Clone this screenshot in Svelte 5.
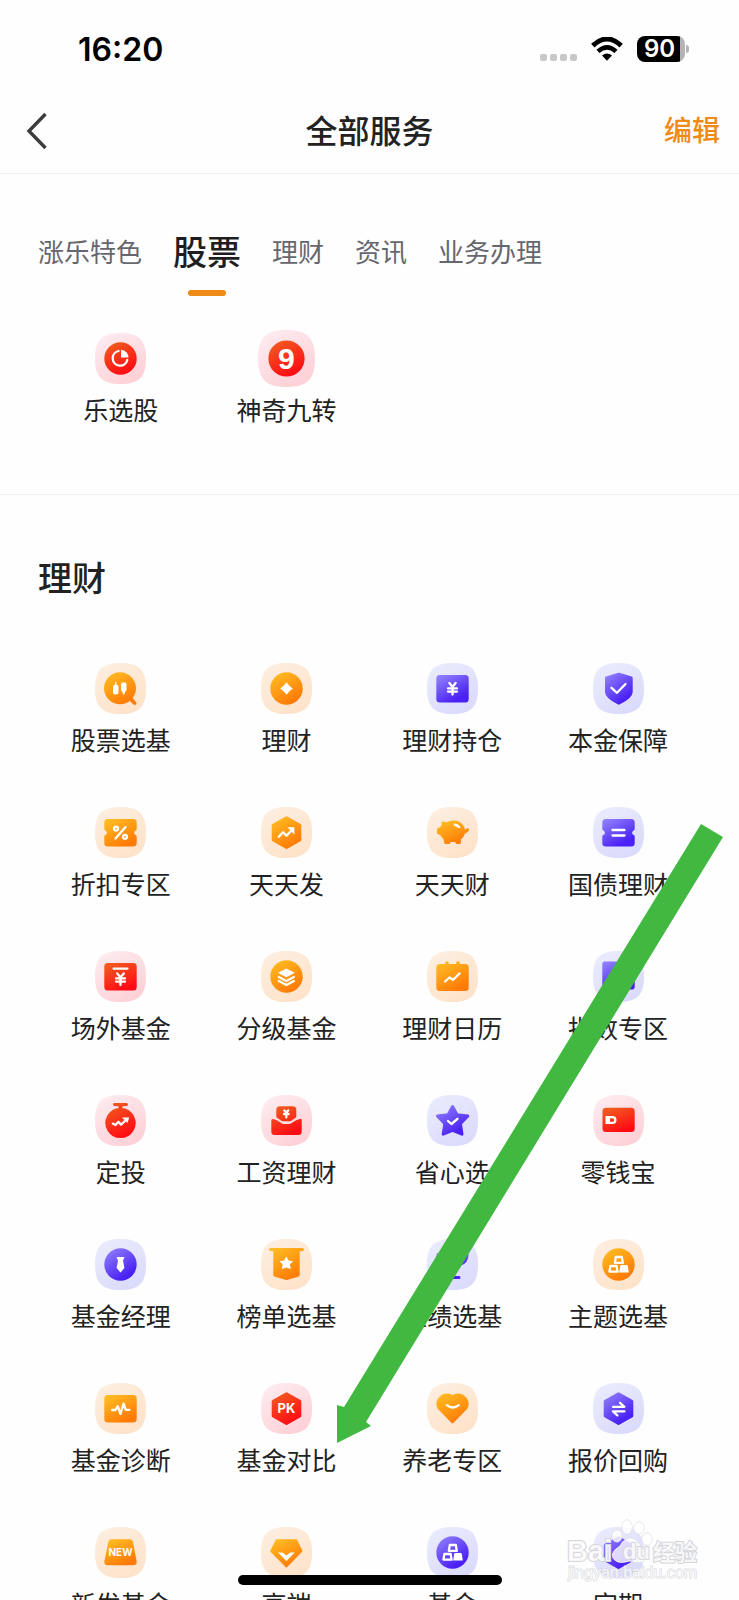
<script lang="ts">
  type Tone = 'red' | 'orange' | 'purple'

  interface Service {
    label: string
    tone: Tone
    body: string
    // white details on top of the body
    fill?: string
    line?: string
    text?: string
    textSize?: number
    dot?: string
    large?: boolean
  }

  const circle = 'M25.5 10.8a14.7 14.7 0 1 1 0 29.4a14.7 14.7 0 1 1 0-29.4Z'
  const card =
    'M12.8 13.5H38.2A2 2 0 0 1 40.2 15.5V36A2 2 0 0 1 38.2 38H12.8A2 2 0 0 1 10.8 36V15.5A2 2 0 0 1 12.8 13.5Z'
  const hexagon = 'M25.5 10.8L38.8 18.2V33L25.5 40.4L12.2 33V18.2Z'
  const ticket =
    'M12.8 13.5H38.2A2 2 0 0 1 40.2 15.5V22A4 4 0 0 0 40.2 29.5V36A2 2 0 0 1 38.2 38H12.8A2 2 0 0 1 10.8 36V29.5A4 4 0 0 0 10.8 22V15.5A2 2 0 0 1 12.8 13.5Z'
  const yen = 'M22.4 20L25.5 24L28.6 20M21 25.4H30M21 28.6H30M25.5 24V31.6'
  const boxes =
    'M22.8 18H28.8L29.8 23.8H21.8ZM17.4 27H23.6L24.6 32.6H16.4Z'
  const solidBox = 'M28.5 26H33.5Q34.5 26 34.8 27L35.8 33.4H26.2L27.2 27Q27.5 26 28.5 26Z'

  let tabs = ['涨乐特色', '股票', '理财', '资讯', '业务办理']
  let activeTab = $state('股票')

  const stockServices: Service[] = [
    {
      label: '乐选股',
      tone: 'red',
      body: circle,
      fill: 'M26 16.8A8 8 0 0 1 33.6 24.6H26Z',
      line: 'M23.5 18A7.4 7.4 0 1 0 32.3 27',
    },
    {
      label: '神奇九转',
      tone: 'red',
      body: circle,
      text: '9',
      textSize: 27,
      large: true,
    },
  ]

  const wealthServices: Service[] = [
    {
      label: '股票选基',
      tone: 'orange',
      body: 'M25 10.8a14.5 14.5 0 1 1 0 29a14.5 14.5 0 1 1 0-29ZM35 34L40 40.4L39 40L34 35Z',
      fill: 'M20.2 19H21.4V21.5Q23.5 22 23.5 24V29.5Q23.5 31.5 20.8 31.5Q18 31.5 18 29.5V24Q18 22 20.2 21.5ZM28.7 19.2Q31.5 19.2 31.5 21V26.5Q31.5 28.3 30 28.8L29.4 31.5H28L27.4 28.8Q26 28.3 26 26.5V21Q26 19.2 28.7 19.2Z',
    },
    {
      label: '理财',
      tone: 'orange',
      body: circle,
      fill: 'M25.5 19.2Q28 23 31.8 25.5Q28 28 25.5 31.8Q23 28 19.2 25.5Q23 23 25.5 19.2Z',
    },
    { label: '理财持仓', tone: 'purple', body: card, line: yen },
    {
      label: '本金保障',
      tone: 'purple',
      body: 'M25.8 11.2L38.2 15V29Q38 34.5 25.8 40.2Q13.7 34.5 13.5 29V15Z',
      line: 'M18.5 24.8L24 29.8L32.5 21',
    },
    {
      label: '折扣专区',
      tone: 'orange',
      body: ticket,
      line: 'M30.5 20L20.5 31.5M21 19.6a2 2 0 1 1 0 4a2 2 0 1 1 0-4ZM30 27.8a2 2 0 1 1 0 4a2 2 0 1 1 0-4Z',
    },
    {
      label: '天天发',
      tone: 'orange',
      body: hexagon,
      fill: 'M26.5 20.3H33.3V27.5Z',
      line: 'M17.8 29.8L22 25.2L25.5 28.6L31 23',
    },
    {
      label: '天天财',
      tone: 'orange',
      body: 'M16 15.8L19.5 17Q26 13.8 31 15.8Q36.4 18.4 36.6 24Q36.6 29 32.4 31.6V35.6H30L29.3 33.6H22.5L21.8 35.6H18.8L17.6 31Q15.5 29.5 14.8 27.4L11.4 25.4V22.6L14.8 20.8Q16.4 19 16 15.8ZM37 25L40.6 22.8L38 25Z',
      fill: 'M27 16.6Q31.5 16.4 33.5 20.4Q31.4 21.6 30 20Q28 19.4 26.6 18.2Z',
    },
    {
      label: '国债理财',
      tone: 'purple',
      body: ticket,
      line: 'M19.5 23H31.5M19.5 28.5H31.5',
    },
    {
      label: '场外基金',
      tone: 'red',
      body: card,
      line: 'M18.5 17.6H32.5M22.2 22.4L25.5 26.2L28.8 22.4M21 27.4H30M21 30.6H30M25.5 26V34',
    },
    {
      label: '分级基金',
      tone: 'orange',
      body: circle,
      fill: 'M25.3 17.5L33.8 21.8L25.3 26.2L16.8 21.8Z',
      line: 'M17.8 26L25.3 30L32.8 26M17.8 30L25.3 34L32.8 30',
    },
    {
      label: '理财日历',
      tone: 'orange',
      body: 'M12.8 14.6H19.8V11.8H20.2V14.6H30.8V11.8H31.2V14.6H38.2A2 2 0 0 1 40.2 16.6V36.4A2 2 0 0 1 38.2 38.4H12.8A2 2 0 0 1 10.8 36.4V16.6A2 2 0 0 1 12.8 14.6Z',
      line: 'M18 30.5L22.5 26.5L26 28.8L32.5 22.5',
    },
    {
      label: '指数专区',
      tone: 'purple',
      body: 'M12 12H39A1 1 0 0 1 40.2 13V36A1 1 0 0 1 39 37H12A1 1 0 0 1 10.8 36V13A1 1 0 0 1 12 12Z',
      line: 'M21 28V24M25.5 28V21M30 28V26',
    },
    {
      label: '定投',
      tone: 'red',
      body: 'M19.5 9.5H31.5L26 10V14.4A13.6 13.6 0 1 1 25 14.4V10Z',
      fill: 'M27 22.5H34.2L32.5 28Z',
      line: 'M17.8 28.6L20.5 30L23.4 26.8L26 29.6L31 25',
    },
    {
      label: '工资理财',
      tone: 'red',
      body: 'M18.8 12.8H31.8A2 2 0 0 1 33.8 14.8V21.6L29 24.8H21.6L16.8 21.6V14.8A2 2 0 0 1 18.8 12.8ZM11.8 25.4L14.6 26.4L21.2 30.4H29.6L36.4 26.4L39.2 25.4V36.6A2 2 0 0 1 37.2 38.6H13.8A2 2 0 0 1 11.8 36.6Z',
      line: 'M23.4 15.4L25.3 17.6L27.2 15.4M23 19H27.6M25.3 17.6V22.4',
    },
    {
      label: '省心选',
      tone: 'purple',
      body: 'M25.6 11.5L30 19.8L40.8 21L33.4 28.6L35 39.2L25.6 35.4L16.2 39.2L17.8 28.6L10.4 21L21.2 19.8Z',
      line: 'M21 26L24.4 29L30.5 23.8',
    },
    {
      label: '零钱宝',
      tone: 'red',
      body: 'M13 14.2H38.2A2 2 0 0 1 40.2 16.2V33.6A2 2 0 0 1 38.2 35.6H13A2 2 0 0 1 11 33.6V16.2A2 2 0 0 1 13 14.2Z',
      fill: 'M12.5 21H19.5A4 4 0 0 1 19.5 29H12.5Z',
      dot: 'M17 23.2H19.4A1.8 1.8 0 0 1 19.4 26.8H17Z',
    },
    {
      label: '基金经理',
      tone: 'purple',
      body: circle,
      fill: 'M21.5 18H29.5L28 21.5L29.4 29L25.5 33.6L21.6 29L23 21.5Z',
    },
    {
      label: '榜单选基',
      tone: 'orange',
      body: 'M9.6 10.4H41.4L37.2 11V36L25.5 39.6L13.8 36V11Z',
      fill: 'M25.3 17.6L27.6 21.6L32 22.2L28.9 25.6L29.8 30L25.3 28.4L20.8 30L21.7 25.6L18.6 22.2L23 21.6Z',
    },
    {
      label: '业绩选基',
      tone: 'purple',
      body: 'M16.5 12H34.5V15.5H40Q40 23 33.5 25Q31 30 26.5 31.5V38.5H32H19H24.5V31.5Q20 30 17.5 25Q11 23 11 15.5H16.5Z',
    },
    {
      label: '主题选基',
      tone: 'orange',
      body: circle,
      fill: solidBox,
      line: boxes,
    },
    {
      label: '基金诊断',
      tone: 'orange',
      body: card,
      line: 'M17 27H20.5L22.8 23.2L25.4 31L28.6 20.6L30.8 26.8H34.4',
    },
    {
      label: '基金对比',
      tone: 'red',
      body: hexagon,
      text: 'PK',
      textSize: 13,
    },
    {
      label: '养老专区',
      tone: 'orange',
      body: 'M25.5 14Q29.8 10.4 35.6 13.2Q42.6 18 39 25L25.5 38.8L12 25Q8.4 18 15.4 13.2Q21.2 10.4 25.5 14Z',
      line: 'M19.8 22.2Q25.8 26.8 31.8 22.2',
    },
    {
      label: '报价回购',
      tone: 'purple',
      body: hexagon,
      line: 'M20 23.8H31.4L27 19.8M31.4 28.4H20L24.4 32.4',
    },
    {
      label: '新发基金',
      tone: 'orange',
      body: 'M16.4 13.8H34.8Q36 13.8 36.4 15L40.2 34.6Q40.4 36.8 38.4 36.8H12.6Q10.6 36.8 10.8 34.6L14.8 15Q15.2 13.8 16.4 13.8Z',
      text: 'NEW',
      textSize: 10,
    },
    {
      label: '高端',
      tone: 'orange',
      body: 'M16 13.8H35L39.8 24L25.4 38.8L10.8 24Z',
      fill: 'M17 25.4H21.5L25.4 28.4L29.3 25.4H33.8L25.4 34Z',
    },
    {
      label: '基金',
      tone: 'purple',
      body: circle,
      fill: solidBox,
      line: boxes,
    },
    { label: '定期', tone: 'purple', body: hexagon },
  ]
</script>

{#snippet serviceGrid(services: Service[])}
  <div class="grid">
    {#each services as service}
      <button class="service">
        <svg class="tile" class:large={service.large} viewBox="0 0 51 51" aria-hidden="true">
          <path
            d="M25.5 0C44 0 51 7 51 25.5S44 51 25.5 51S0 44 0 25.5S7 0 25.5 0Z"
            fill="url(#tile-{service.tone})"
          />
          <path
            class="body"
            d={service.body}
            fill="url(#{service.tone})"
            stroke="url(#{service.tone})"
          />
          {#if service.fill}
            <path d={service.fill} fill="#fff" />
          {/if}
          {#if service.dot}
            <path d={service.dot} fill="url(#{service.tone})" />
          {/if}
          {#if service.line}
            <path class="line" d={service.line} />
          {/if}
          {#if service.text}
            <text
              class:digit={service.large}
              x="25.5"
              y={25.5 + service.textSize! * 0.36}
              font-size={service.textSize}>{service.text}</text
            >
          {/if}
        </svg>
        <span>{service.label}</span>
      </button>
    {/each}
  </div>
{/snippet}

<svg class="defs" width="0" height="0" aria-hidden="true">
  <defs>
    <linearGradient id="red" x1="0.2" y1="0" x2="0.7" y2="1">
      <stop offset="0" stop-color="#f2581f" />
      <stop offset="1" stop-color="#ff0a14" />
    </linearGradient>
    <linearGradient id="orange" x1="0.1" y1="0" x2="0.7" y2="1">
      <stop offset="0" stop-color="#ffbb22" />
      <stop offset="1" stop-color="#ff7a06" />
    </linearGradient>
    <linearGradient id="purple" x1="0.1" y1="0" x2="0.7" y2="0.9">
      <stop offset="0" stop-color="#8d7cfb" />
      <stop offset="1" stop-color="#4a20f4" />
    </linearGradient>
    <linearGradient id="tile-red" x1="0.2" y1="0" x2="0.8" y2="1">
      <stop offset="0" stop-color="#fdebf0" />
      <stop offset="1" stop-color="#fecfd4" />
    </linearGradient>
    <linearGradient id="tile-orange" x1="0.2" y1="0" x2="0.8" y2="1">
      <stop offset="0" stop-color="#fdeee0" />
      <stop offset="1" stop-color="#fee2c8" />
    </linearGradient>
    <linearGradient id="tile-purple" x1="0.2" y1="0" x2="0.8" y2="1">
      <stop offset="0" stop-color="#ebebfd" />
      <stop offset="1" stop-color="#d9d9fb" />
    </linearGradient>
  </defs>
</svg>

<div class="screen">
  <div class="status">
    <time>16:20</time>
    <div class="signals">
      <div class="dots"><i></i><i></i><i></i><i></i></div>
      <svg width="32" height="24" viewBox="0 0 32 24" aria-hidden="true">
        <path d="M1.8 8.6Q16-4.6 30.2 8.6" fill="none" stroke="#000" stroke-width="5" />
        <path d="M7 14.4Q16 6.4 25 14.4" fill="none" stroke="#000" stroke-width="4.6" />
        <path d="M11 18.4Q16 14.6 21 18.4L16 23.8Z" />
      </svg>
      <div class="battery"><span>90</span></div>
    </div>
  </div>

  <header>
    <button class="back" aria-label="返回">
      <svg width="22" height="38" viewBox="0 0 22 38" aria-hidden="true">
        <path d="M19.5 2L3 19L19.5 36" fill="none" stroke="#3c3c3e" stroke-width="3.4" />
      </svg>
    </button>
    <h1>全部服务</h1>
    <button class="edit">编辑</button>
  </header>

  <nav>
    {#each tabs as tab}
      <button class:active={tab === activeTab} onclick={() => (activeTab = tab)}>{tab}</button>
    {/each}
  </nav>

  <section class="stocks">
    {@render serviceGrid(stockServices)}
  </section>

  <section class="wealth">
    <h2>理财</h2>
    {@render serviceGrid(wealthServices)}
  </section>

  <svg class="arrow" width="388" height="620" viewBox="0 0 388 620" aria-hidden="true">
    <path d="M365 1L387 14L30 599L35 603L1 620V582L8 584Z" fill="#41b941" />
  </svg>

  <div class="home-indicator"></div>

  <svg class="watermark" width="140" height="66" viewBox="0 0 140 66">
    <text x="4" y="43" font-size="29">Bai</text>
    <g class="paw">
      <ellipse cx="54" cy="18" rx="5" ry="6" />
      <ellipse cx="64" cy="9" rx="5" ry="7" />
      <ellipse cx="76" cy="10" rx="5" ry="6" />
      <ellipse cx="84" cy="21" rx="5" ry="6" />
      <path d="M67 20Q60 21 57 28Q47 34 50 40Q54 47 67 43Q79 47 83 41Q87 35 78 29Q74 20 67 20Z" />
    </g>
    <text x="60" y="41" font-size="22">du</text>
    <text x="90" y="42" font-size="22">经验</text>
    <text class="domain" x="5" y="60" font-size="16">jingyan.baidu.com</text>
  </svg>
</div>

<style>
  :global(body) {
    margin: 0;
    background: #fefefe;
  }

  .defs {
    position: absolute;
  }

  .screen {
    position: relative;
    height: 100vh;
    overflow: hidden;
    color: #222;
    background: #fefefe;
    font-family: 'Noto Sans CJK SC', sans-serif;
  }

  button {
    padding: 0;
    border: 0;
    background: none;
    color: inherit;
    font: inherit;
    cursor: pointer;
  }

  .status {
    display: flex;
    align-items: center;
    justify-content: space-between;
    box-sizing: border-box;
    height: 89px;
    padding: 9px 54px 0 78px;
    color: #000;
    font-family: Inter, sans-serif;
    font-weight: 600;
  }

  time {
    font-size: 32px;
  }

  .signals {
    display: flex;
    align-items: center;
    gap: 14px;
  }

  .dots {
    display: flex;
    gap: 3px;
    padding-top: 17px;
  }

  .dots i {
    width: 7px;
    height: 7px;
    border-radius: 2px;
    background: #c8c8c8;
  }

  .battery {
    position: relative;
    width: 48px;
    height: 26px;
    border-radius: 8px;
    background: linear-gradient(90deg, #000 90%, #b4b4b4 90%);
    color: #fff;
    font-size: 24px;
    line-height: 26px;
  }

  .battery span {
    display: block;
    width: 45px;
    text-align: center;
  }

  .battery::after {
    content: '';
    position: absolute;
    top: 9px;
    right: -4px;
    width: 3px;
    height: 8px;
    border-radius: 0 4px 4px 0;
    background: #b4b4b4;
  }

  header {
    display: grid;
    grid-template-columns: 1fr auto 1fr;
    align-items: center;
    height: 84px;
    padding: 0 19px;
    border-bottom: 1px solid #f0f0f0;
  }

  .back {
    justify-self: start;
    height: 38px;
    padding-left: 7px;
  }

  h1 {
    margin: 0;
    padding-bottom: 4px;
    font-size: 32px;
    font-weight: 500;
    line-height: 48px;
  }

  .edit {
    justify-self: end;
    padding-bottom: 4px;
    color: #ef8a17;
    font-size: 28px;
    font-weight: 500;
    line-height: 48px;
  }

  nav {
    display: flex;
    gap: 31px;
    padding: 53px 38px 0;
  }

  nav button {
    position: relative;
    padding-bottom: 21px;
    color: #66666f;
    font-size: 26px;
    line-height: 48px;
    white-space: nowrap;
  }

  nav .active {
    color: #1e1e1e;
    font-size: 34px;
    font-weight: 500;
  }

  nav .active::after {
    content: '';
    position: absolute;
    bottom: 0;
    left: 50%;
    width: 38px;
    height: 6px;
    margin-left: -19px;
    border-radius: 3px;
    background: #ef8a17;
  }

  .stocks {
    padding: 37px 38px 67px;
    border-bottom: 1px solid #f0f0f0;
  }

  .wealth {
    padding: 58px 38px 0;
  }

  h2 {
    margin: 0 0 62px;
    font-size: 34px;
    font-weight: 500;
    line-height: 48px;
  }

  .grid {
    display: grid;
    grid-template-columns: repeat(4, 1fr);
    row-gap: 50px;
  }

  .service {
    display: flex;
    flex-direction: column;
    align-items: center;
    gap: 7px;
    font-size: 25px;
    line-height: 36px;
  }

  .tile {
    width: 51px;
    height: 51px;
  }

  .tile.large {
    width: 57px;
    height: 57px;
    margin: -3px;
  }

  .tile .body {
    stroke-width: 3;
    stroke-linejoin: round;
  }

  .tile .line {
    fill: none;
    stroke: #fff;
    stroke-width: 2.3;
    stroke-linecap: round;
    stroke-linejoin: round;
  }

  .tile text {
    fill: #fff;
    font-family: Inter, sans-serif;
    font-weight: 700;
    text-anchor: middle;
  }

  .tile .digit {
    font-family: 'Liberation Sans', sans-serif;
  }

  .arrow {
    position: absolute;
    top: 823px;
    left: 336px;
  }

  .home-indicator {
    position: absolute;
    bottom: 15px;
    left: 50%;
    width: 264px;
    height: 10px;
    margin-left: -132px;
    border-radius: 5px;
    background: #000;
  }

  .watermark {
    position: absolute;
    right: 36px;
    bottom: 16px;
    fill: #fff;
    fill-opacity: 0.8;
    stroke: #d6d6dc;
    stroke-width: 2;
    font-family: 'Liberation Sans', 'Noto Sans CJK SC', sans-serif;
    font-weight: 700;
    paint-order: stroke;
  }

  .paw {
    stroke-width: 1;
  }

  .watermark .domain {
    stroke-width: 1;
    font-weight: 400;
  }
</style>
